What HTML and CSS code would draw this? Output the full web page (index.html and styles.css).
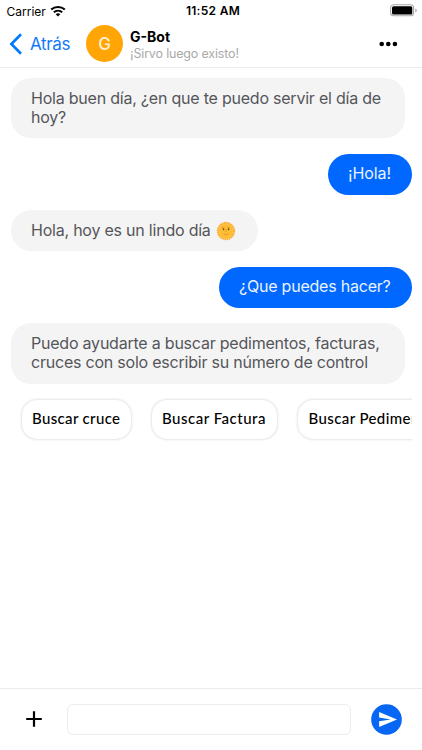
FILE: index.html
```html
<!DOCTYPE html>
<html lang="es">
<head>
<meta charset="utf-8">
<title>G-Bot</title>
<link rel="stylesheet" href="styles.css">
</head>
<body>
<div class="status">
  <div class="carrier"><span>Carrier</span>
    <svg class="wifi" viewBox="0 0 16 12" width="16" height="12"><path d="M1.2 4.6a10 10 0 0 1 13.6 0" fill="none" stroke="#000" stroke-width="2.1"/><path d="M3.8 7.3a6.2 6.2 0 0 1 8.4 0" fill="none" stroke="#000" stroke-width="2"/><path d="M5.7 9.2a3.4 3.4 0 0 1 4.6 0L8 11.6z"/></svg>
  </div>
  <div class="clock"><span>11:52 AM</span></div>
  <svg class="battery" viewBox="0 0 28 13" width="28" height="13"><rect x=".6" y=".8" width="23" height="11" rx="3" fill="#fff" stroke="#a9a9a9" stroke-width="1.1"/><rect x="2" y="2.2" width="20.3" height="8.2" rx="1.5"/><path d="M25.3 4.5v4q1.5-.5 1.5-2t-1.5-2z" fill="#a9a9a9"/></svg>
</div>
<header class="header">
  <svg class="back" viewBox="0 0 14 22" width="14" height="22"><path d="M12 1.3 2.4 11 12 20.7" fill="none" stroke="#007aff" stroke-width="2.7"/></svg>
  <span class="back-label">Atrás</span>
  <div class="avatar">G</div>
  <div class="who"><div class="name"><span>G-Bot</span></div><div class="tagline"><span>¡Sirvo luego existo!</span></div></div>
  <svg class="more" viewBox="0 0 19 6" width="19" height="6"><circle cx="2.7" cy="3" r="2.3"/><circle cx="9.3" cy="3" r="2.3"/><circle cx="15.9" cy="3" r="2.3"/></svg>
</header>
<main class="chat">
  <div class="bubble bot full"><span>Hola buen día, ¿en que te puedo servir el día de</span><br><span>hoy?</span></div>
  <div class="bubble me hola"><span>¡Hola!</span></div>
  <div class="bubble bot sunny"><span>Hola, hoy es un lindo día</span>
    <svg class="sun" viewBox="0 0 20 20" width="20" height="20"><circle cx="10" cy="10" r="8.3" fill="#ffc54a" stroke="#f9ac2c" stroke-width="1.8" stroke-dasharray="1.5 .67"/><circle cx="10" cy="10" r="6.8" fill="#ffbd35"/><ellipse cx="7.5" cy="8.3" rx=".8" ry="1" fill="#69451e"/><ellipse cx="12.5" cy="8.3" rx=".8" ry="1" fill="#69451e"/><path d="M5.8 6.8q1.5-1.2 2.7-.4M14.2 6.8q-1.5-1.2-2.7-.4M10 8v3.2M7.7 13q2.3 1.4 4.6 0" fill="none" stroke="#d98a20" stroke-width=".7"/></svg>
  </div>
  <div class="bubble me ask"><span>¿Que puedes hacer?</span></div>
  <div class="bubble bot full"><span>Puedo ayudarte a buscar pedimentos, facturas,</span><br><span>cruces con solo escribir su número de control</span></div>
  <div class="chips">
    <div class="chip c1"><span>Buscar cruce</span></div>
    <div class="chip c2"><span>Buscar Factura</span></div>
    <div class="chip c3"><span>Buscar Pedimento</span></div>
  </div>
</main>
<footer class="composer">
  <svg class="plus" viewBox="0 0 16 16" width="16" height="16"><path d="M8 .2v15.6M.2 8h15.6" stroke="#000" stroke-width="2.2"/></svg>
  <div class="field"></div>
  <svg class="send" viewBox="0 0 31 31" width="31" height="31"><circle cx="15.5" cy="15.5" r="15.3" fill="#0866f5"/><path d="M8.1 7.9 26 15.4 8.1 23v-5.8l11.5-1.8L8.1 13.6z" fill="#fff"/></svg>
</footer>
</body>
</html>
```
FILE: styles.css
```css
* { box-sizing: border-box; }
body {
  margin: 0;
  width: 422px;
  height: 750px;
  display: flex;
  flex-direction: column;
  overflow: hidden;
  background: #fff;
  color: #000;
  font-family: Inter, "Liberation Sans", sans-serif;
  white-space: nowrap;
}
svg { display: block; flex: none; }
.status {
  height: 22px;
  display: grid;
  grid-template-columns: 1fr auto 1fr;
  align-items: center;
  padding: 0 5px 0 7px;
  font-size: 12px;
}
.carrier { display: flex; gap: 5px; align-items: center; margin-left: -0.5px; }
.wifi { margin-left: -1px; }
.clock { font-weight: 600; letter-spacing: 0.3px; padding-left: 2px; margin-top: -1px; }
.battery { justify-self: end; margin-top: -1px; margin-right: -1px; }
.header {
  height: 46px;
  display: flex;
  align-items: center;
  padding: 0 24px 2px 9px;
  border-bottom: 1px solid #ebebeb;
}
.back-label {
  width: 56px;
  padding-left: 7px;
  color: #1479f8;
  font-size: 17px;
  letter-spacing: -0.35px;
}
.avatar {
  width: 37px;
  height: 37px;
  margin-left: 7px;
  border-radius: 50%;
  background: #ffa505;
  color: #fff0d0;
  font-size: 17px;
  font-weight: 500;
  line-height: 38px;
  text-align: center;
}
.who { margin: 2px 0 0 7px; flex: 1; }
.name { font-size: 14px; font-weight: 700; line-height: 17px; }
.tagline { font-size: 12.5px; line-height: 17px; color: #aaa; letter-spacing: -0.17px; }
.chat {
  flex: 1;
  display: flex;
  flex-direction: column;
  align-items: flex-start;
  gap: 15.5px;
  padding: 10px 10.5px 0;
}
.bubble {
  padding: 10.6px 20px;
  border-radius: 20.4px;
  font-size: 16px;
  line-height: 19.6px;
  letter-spacing: -0.22px;
}
.bot { background: #f4f4f4; color: #55565b; padding-left: 20.5px; }
.me { align-self: flex-end; background: #0068ff; color: #e9f3ff; padding-left: 20.5px; }
.full { width: 394.5px; border-radius: 20px; }
.hola { width: 84px; letter-spacing: -0.1px; }
.sunny { width: 247.5px; display: flex; align-items: center; gap: 5px; }
.ask { width: 193px; }
.chips {
  width: 401px;
  display: flex;
  gap: 21px;
  margin-top: -3px;
  padding: 4px 0 5px 11px;
  overflow: hidden;
}
.chip {
  flex: none;
  height: 38.5px;
  padding-left: 10.5px;
  border-radius: 15px;
  background: #fff;
  box-shadow: 0 0 3px rgba(0, 0, 0, 0.22);
  font-family: Lato, sans-serif;
  font-weight: 500;
  font-size: 15px;
  line-height: 37px;
  letter-spacing: 0.35px;
}
.c1 { width: 109px; }
.c2 { width: 125.5px; letter-spacing: 0.5px; }
.c3 { width: 150px; letter-spacing: 0.4px; }
.composer {
  height: 62px;
  border-top: 1px solid #ebebeb;
  display: flex;
  align-items: center;
  padding: 0 20px 0 26px;
}
.plus { margin-top: -2px; }
.field {
  width: 284px;
  height: 31px;
  margin-left: 25px;
  border: 1px solid #ececec;
  border-radius: 6px;
}
.send { margin-left: auto; margin-top: -1px; }
```
